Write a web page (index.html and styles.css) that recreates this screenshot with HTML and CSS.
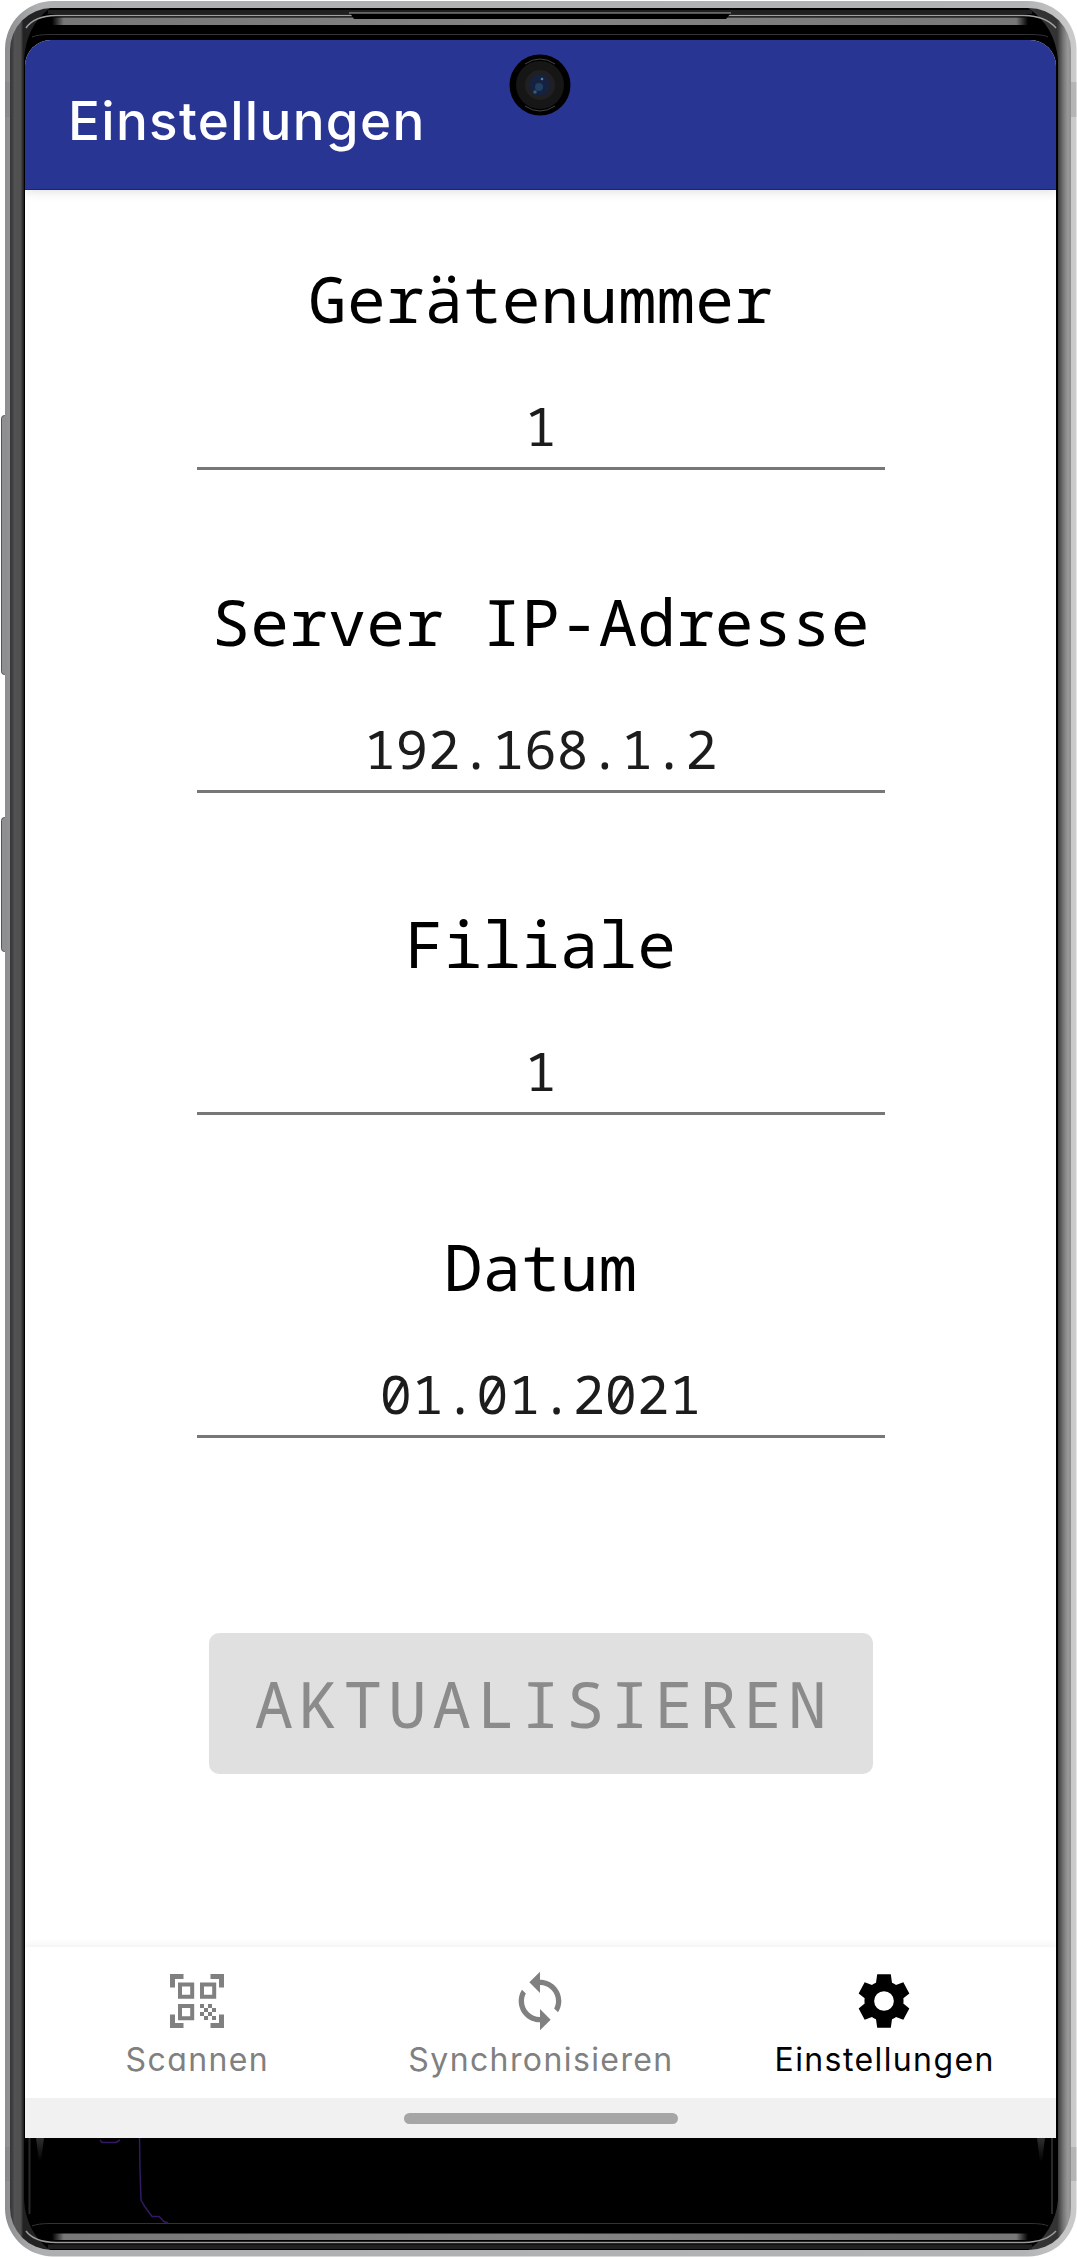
FILE: index.html
```html
<!DOCTYPE html>
<html lang="de">
<head>
<meta charset="utf-8">
<title>Einstellungen</title>
<link rel="stylesheet" href="styles.css">
</head>
<body>
<div class="device">
  <svg class="frame" viewBox="0 0 1077 2258" aria-hidden="true">
    <defs>
      <linearGradient id="rim" x1="0" x2="1" y1="0" y2="0">
        <stop offset="0" stop-color="#8c8d8f"/><stop offset=".03" stop-color="#adafb0"/><stop offset=".95" stop-color="#b2b3b4"/><stop offset="1" stop-color="#cbcbcb"/>
      </linearGradient>
      <linearGradient id="side" gradientUnits="userSpaceOnUse" x1="10" x2="1072" y1="0" y2="0">
        <stop offset="0" stop-color="#363636"/><stop offset=".003" stop-color="#444"/><stop offset=".004" stop-color="#525252"/><stop offset=".01" stop-color="#505050"/><stop offset=".0125" stop-color="#222"/>
        <stop offset=".986" stop-color="#333"/><stop offset=".992" stop-color="#777"/><stop offset=".996" stop-color="#999"/><stop offset="1" stop-color="#8a8a8a"/>
      </linearGradient>
      <linearGradient id="band" x1="0" x2="1" y1="0" y2="0">
        <stop offset="0" stop-color="#000"/><stop offset=".012" stop-color="#777"/><stop offset=".5" stop-color="#848484"/><stop offset=".988" stop-color="#777"/><stop offset="1" stop-color="#000"/>
      </linearGradient>
      <linearGradient id="glint" x1="0" x2="0" y1="0" y2="1">
        <stop offset="0" stop-color="#444"/><stop offset="1" stop-color="#000"/>
      </linearGradient>
      <clipPath id="body"><rect x="10" y="8" width="1061" height="2242" rx="42"/></clipPath>
    </defs>
    <g fill="#8e908f" stroke="#555" stroke-width="1">
      <rect x="1.5" y="415.500" width="8" height="259" rx="3"/>
      <rect x="1.500" y="817.500" width="8" height="134" rx="3"/>
    </g>
    <rect x="5" y="1" width="1071.500" height="2255.500" rx="48" fill="url(#rim)"/>
    <path d="M5 82h5v35H5zM1071 82h5.500v35h-5.500zM5 2147h5v34H5zM1071 2147h5.500v34h-5.500z" fill="#777" opacity=".25"/>
    <g clip-path="url(#body)">
      <rect x="10" y="8" width="1062" height="2242" fill="url(#side)"/>
      <path d="M24 60Q26 26 50 8H1028Q1055 26 1058 60V2200Q1055 2232 1028 2250H50Q26 2232 24 2200Z" fill="#000"/>
      <path d="M48 10H1032V14H48zM48 2244.500H1032V2249H48z" fill="#202020"/>
      <path d="M26 28Q34 16 56 15.500H352M1056 28Q1046 16 1024 15.500H726" fill="none" stroke="#a0a0a0" stroke-width="1.500"/>
      <path d="M26 2231Q34 2242 56 2242.500H1024Q1046 2242 1056 2231" fill="none" stroke="#999" stroke-width="1.500"/>
      <path d="M52 17.500H1028V25H52zM52 2233.500H1028V2240H52z" fill="url(#band)"/>
      <path d="M350 13H731L726 19H354z" fill="#000"/>
      <path d="M349 13H731" stroke="#aaa"/>
      <path d="M32 37Q38 34.500 50 34.500H1030Q1044 34.500 1048 37M32 2226Q38 2223.500 50 2223.500H1030Q1044 2223.500 1048 2226" fill="none" stroke="#333"/>
      <path d="M29.500 2138V2214M1052 2138V2214" stroke="#282828" stroke-width="2"/>
      <path d="M36 2138h8l-3 24h-2zM1037 2138h8l-3 24h-2z" fill="url(#glint)" opacity=".7"/>
    </g>
    <path d="M100 2140l2 2.500h14l4-2.500M139.500 2138l.5 32 1 30 4 7 7 9.500h7l5 5 4 1.500" fill="none" stroke="#321a63" stroke-width="1.500"/>
  </svg>

  <main class="screen">
    <header class="bar">
      <h1 class="title">Einstellungen</h1>
      <svg class="camera" viewBox="0 0 62 62" aria-hidden="true">
        <circle cx="31" cy="31" r="30.500" fill="#000"/>
        <circle cx="31" cy="31" r="24" fill="#161616"/>
        <path d="M16 10Q31 0 46 10M16 52Q31 62 46 52" fill="none" stroke="#444" stroke-width="1"/>
        <circle cx="31" cy="31" r="15" fill="#202023"/>
        <circle cx="31" cy="31" r="10.500" fill="#15213f"/>
        <circle cx="30" cy="33" r="4" fill="#20405f"/>
        <circle cx="26" cy="38" r="1.800" fill="#2d5f7c"/>
        <circle cx="33" cy="25" r="1.300" fill="#4f82a0"/>
      </svg>
    </header>

    <form class="form">
      <div class="field">
        <label class="label">Gerätenummer</label>
        <div class="value">1</div>
      </div>
      <div class="field">
        <label class="label">Server IP-Adresse</label>
        <div class="value">192.168.1.2</div>
      </div>
      <div class="field">
        <label class="label">Filiale</label>
        <div class="value">1</div>
      </div>
      <div class="field">
        <label class="label">Datum</label>
        <div class="value">01.01.2021</div>
      </div>
      <button class="submit" type="button" disabled>AKTUALISIEREN</button>
    </form>

    <nav class="tabs">
      <a class="tab">
        <svg class="icon" viewBox="-5 -5 64 64" aria-hidden="true">
          <path d="M0 0h13.500v5H5v8.500H0zM40.500 0H54v13.500h-5V5h-8.500zM0 40.500h5V49h8.500v5H0zM49 40.500h5V54H40.500v-5H49z"/>
          <path d="M10 10.500h12.200v12.200H10zM32 10.500h12.200v12.200H32zM10 32h12.200v12.200H10z" fill="none" stroke="currentColor" stroke-width="4"/>
          <path d="M30 30h4v4h-4zM38 30h4v4h-4zM34 34h4v4h-4zM42 34h4v4h-4zM30 38h4v4h-4zM38 38h4v4h-4zM34 42h4v4h-4zM42 42h4v4h-4z"/>
        </svg>
        <span class="caption">Scannen</span>
      </a>
      <a class="tab">
        <svg class="icon" viewBox="0 0 24 24" aria-hidden="true"><path d="M12 4V1L8 5l4 4V6c3.310 0 6 2.690 6 6 0 1.010-.25 1.970-.7 2.800l1.460 1.460C19.540 15.030 20 13.570 20 12c0-4.420-3.580-8-8-8zm0 14c-3.310 0-6-2.690-6-6 0-1.010.25-1.970.7-2.800L5.240 7.740C4.460 8.970 4 10.430 4 12c0 4.420 3.580 8 8 8v3l4-4-4-4v3z"/></svg>
        <span class="caption">Synchronisieren</span>
      </a>
      <a class="tab active">
        <svg class="icon" viewBox="0 0 24 24" aria-hidden="true"><path d="M12 15.700A3.700 3.700 0 0 1 8.300 12 3.700 3.700 0 0 1 12 8.300a3.700 3.700 0 0 1 3.700 3.700 3.700 3.700 0 0 1-3.700 3.700m7.250-2.730c.04-.32.07-.64.07-.97s-.03-.66-.07-1L21.500 9.150 19.250 4.950 16.500 6.020c-.52-.39-.9-.6-1.500-.85L14.550 2H9.450L9 5.170c-.6.25-1 .46-1.500.85L4.750 4.950 2.500 9.150 4.750 11c-.04.34-.07.67-.07 1s.03.65.07.97L2.500 14.850 4.750 19.050 7.500 17.980c.5.39.9.6 1.500.85L9.450 22h5.100L15 18.830c.6-.25 1-.46 1.500-.85l2.750 1.070 2.250-4.200z"/></svg>
        <span class="caption">Einstellungen</span>
      </a>
    </nav>
    <div class="gesture"><div class="pill"></div></div>
  </main>
</div>
</body>
</html>
```
FILE: styles.css
```css
* { box-sizing: border-box; }

body {
  margin: 0;
  background: #fff;
}

.device {
  position: relative;
  width: 1077px;
  height: 2258px;
  padding: 40px 21px 120px 25px;
  overflow: hidden;
}

.frame {
  position: absolute;
  inset: 0;
  width: 1077px;
  height: 2258px;
}

.screen {
  position: relative;
  display: flex;
  flex-direction: column;
  height: 2098px;
  overflow: hidden;
  background: #fff;
  border-radius: 26px 26px 0 0;
}

.bar {
  position: relative;
  display: flex;
  align-items: center;
  flex: none;
  height: 150px;
  padding: 12px 0 0 43px;
  background: #293593;
  border-bottom: 1px solid #1a2186;
  box-shadow: 0 2px 10px rgba(0, 0, 0, .12);
}

.title {
  margin: 0;
  font: 500 53px/64px Inter, sans-serif;
  font-feature-settings: "cv11";
  letter-spacing: 1.300px;
  color: #fff;
}

.camera {
  position: absolute;
  left: 484px;
  top: 14px;
  width: 62px;
  height: 62px;
}

.form {
  display: flex;
  flex-direction: column;
  align-items: center;
  flex: 1;
  padding-top: 65px;
}

.field {
  display: flex;
  flex-direction: column;
  width: 688px;
  height: 322.700px;
  text-align: center;
}

.label {
  font: 64.500px/86px "Noto Sans Mono", "DejaVu Sans Mono", monospace;
  color: #000;
  white-space: nowrap;
}

.value {
  height: 129px;
  padding-top: 49px;
  font: 53.600px/72px "Noto Sans Mono", "DejaVu Sans Mono", monospace;
  color: #1c1c1c;
  border-bottom: 3px solid #777;
}

.submit {
  flex: none;
  width: 664px;
  height: 141px;
  margin-top: 87px;
  padding: 0 0 0 6px;
  border: 0;
  border-radius: 10px;
  background: #e0e0e0;
  font: 64.500px/86px "Noto Sans Mono", "DejaVu Sans Mono", monospace;
  letter-spacing: 5.750px;
  color: #8b8b8b;
}

.tabs {
  display: grid;
  grid-template-columns: repeat(3, 1fr);
  flex: none;
  height: 151px;
  background: #fff;
  box-shadow: 0 -2px 8px rgba(0, 0, 0, .06);
}

.tab {
  display: flex;
  flex-direction: column;
  align-items: center;
  padding-top: 22px;
  color: #808080;
}

.tab.active { color: #000; }

.icon {
  width: 64px;
  height: 64px;
  fill: currentColor;
}

.caption {
  margin-top: 6px;
  padding-left: 1px;
  font: 32px/42px Inter, sans-serif;
  font-feature-settings: "cv11";
  letter-spacing: 1.400px;
}

.gesture {
  display: flex;
  flex: none;
  justify-content: center;
  height: 40px;
  padding-top: 15px;
  background: #f1f1f1;
}

.pill {
  width: 274px;
  height: 11px;
  border-radius: 6px;
  background: #a6a6a6;
}
```
